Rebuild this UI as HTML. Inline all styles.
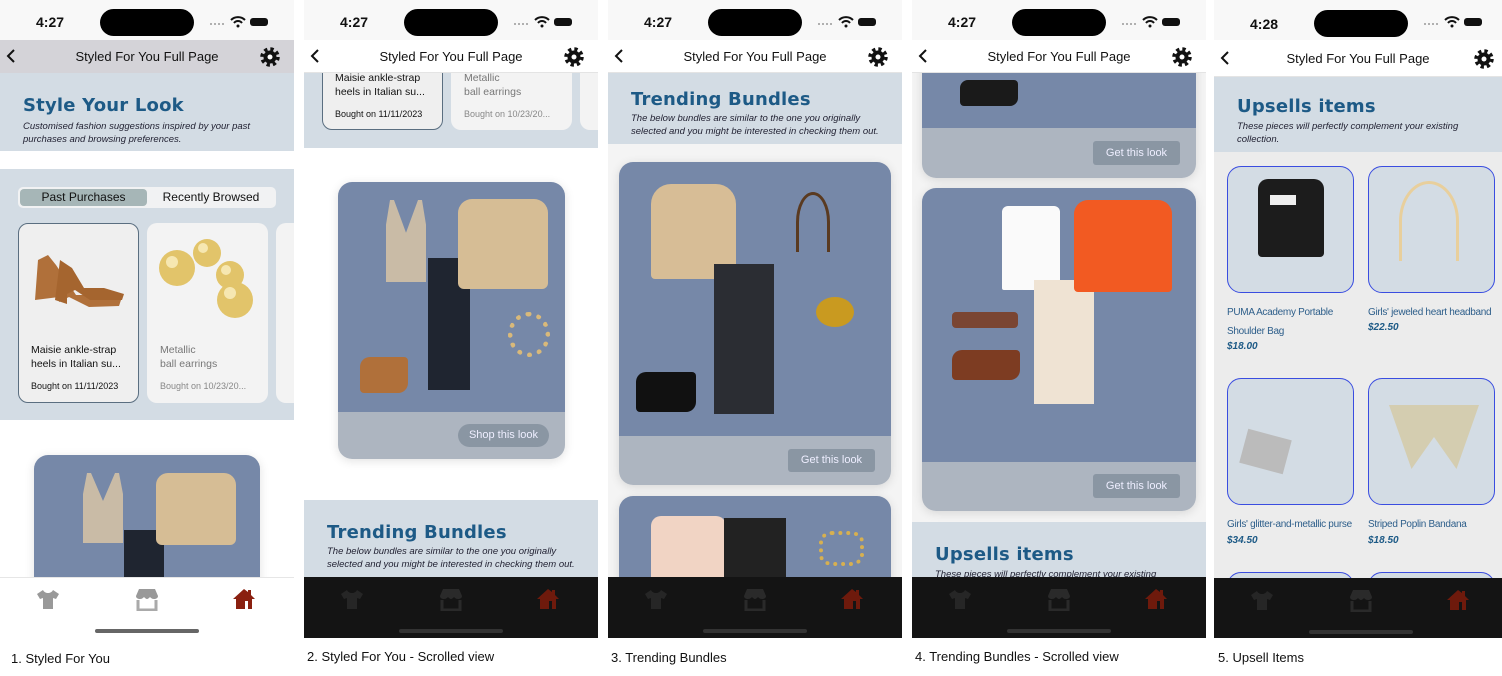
<!DOCTYPE html>
<html><head><meta charset="utf-8"><style>
*{margin:0;padding:0;box-sizing:border-box}
body{width:1502px;height:676px;background:#fff;position:relative;overflow:hidden;font-family:"Liberation Sans",sans-serif}
.a{position:absolute}
.ph{position:absolute;top:0;height:638px;overflow:hidden;background:#fff}
.sb{position:absolute;left:0;right:0;top:0;height:40px;background:#f8f8f8}
.time{position:absolute;top:14px;left:36px;font-size:14px;font-weight:bold;color:#111}
.isl{position:absolute;top:9px;left:100px;width:94px;height:27px;border-radius:14px;background:#000}
.nav{position:absolute;left:0;right:0;top:40px;height:33px;background:#fff;border-bottom:1px solid #e4e4e4}
.nav .t{position:absolute;left:0;right:0;top:9px;text-align:center;font-size:13px;color:#111}
.band{position:absolute;left:0;right:0;background:#d3dce4}
.h1{position:absolute;font-family:"DejaVu Sans",sans-serif;font-weight:bold;color:#1d5a86;font-size:18px;letter-spacing:.2px}
.sub{position:absolute;font-style:italic;font-size:9.5px;line-height:13px;color:#223}
.card{position:absolute;border-radius:14px;overflow:hidden;box-shadow:0 2px 10px rgba(0,0,0,.12)}
.img{position:absolute;left:0;right:0;top:0;background:#7688a8}
.bot{position:absolute;left:0;right:0;bottom:0;background:#adb5c0}
.btn{position:absolute;background:#8a96a3;color:#eef;font-size:11px;text-align:center}
.bn{position:absolute;left:0;right:0;top:577px;height:61px}
.cap{position:absolute;top:651px;font-family:"Liberation Sans",sans-serif;font-size:13px;color:#111}
.it{position:absolute;border-radius:14px;border:1px solid #3a4de0;background:#d3dce4}
.ttl{position:absolute;font-size:10px;letter-spacing:-.3px;white-space:nowrap;color:#2d5e8a;font-family:"Liberation Sans",sans-serif;line-height:19px}
.pr{position:absolute;font-size:10px;font-style:italic;font-weight:bold;color:#1d5a86}
</style></head><body>

<!-- ========== PHONE 1 ========== -->
<div class="ph" style="left:0;width:294px">
 <div class="sb"></div><div class="time">4:27</div><div class="isl"></div>
 <svg class="a" style="left:208px;top:16px" width="64" height="12"><g fill="#999"><circle cx="3" cy="8" r="1"/><circle cx="7" cy="8" r="1"/><circle cx="11" cy="8" r="1"/><circle cx="15" cy="8" r="1"/></g><path d="M23 4a10 10 0 0 1 14 0M26 7a5 5 0 0 1 8 0" stroke="#111" stroke-width="2" fill="none"/><circle cx="30" cy="10" r="1.5" fill="#111"/><rect x="42" y="2" width="18" height="8" rx="3" fill="#111"/></svg>
 <div class="nav" style="background:#d4d3d8;border:0"><div class="t">Styled For You Full Page</div></div>
 <div class="band" style="top:73px;height:78px"></div>
 <div class="h1" style="left:23px;top:95px">Style Your Look</div>
 <div class="sub" style="left:23px;top:120px">Customised fashion suggestions inspired by your past<br>purchases and browsing preferences.</div>
 <div class="band" style="top:169px;height:251px"></div>
 <div class="a" style="left:18px;top:187px;width:258px;height:21px;background:#f1f2f3;border-radius:5px"></div>
 <div class="a" style="left:20px;top:189px;width:127px;height:17px;background:#a6b6b7;border-radius:4px;font-size:12px;text-align:center;line-height:17px;color:#111">Past Purchases</div>
 <div class="a" style="left:148px;top:189px;width:126px;height:17px;font-size:12px;text-align:center;line-height:17px;color:#111">Recently Browsed</div>
 <div class="a" style="left:18px;top:223px;width:121px;height:180px;background:#efefef;border:1.5px solid #5a6e80;border-radius:10px"></div>
 <svg class="a" style="left:30px;top:240px" width="98" height="70"><path d="M5 60l3-40 10-5 8 10 20 30h20l25 5-2 6-30 1-20-10-10 5v-5z" fill="#b0703a"/><path d="M25 60l5-40 12 8 12 20h20l20 6-2 6H60l-15-10-8 4v10z" fill="#a5652f"/></svg>
 <div class="a" style="left:31px;top:343px;font-size:10.5px;line-height:14px;color:#111">Maisie ankle-strap<br>heels in Italian su...</div>
 <div class="a" style="left:31px;top:381px;font-size:9px;color:#111">Bought on 11/11/2023</div>
 <div class="a" style="left:147px;top:223px;width:121px;height:180px;background:#f3f3f3;border-radius:10px"></div>
 <svg class="a" style="left:158px;top:235px" width="100" height="90"><g fill="#e2c46a"><circle cx="19" cy="33" r="18"/><circle cx="49" cy="18" r="14"/><circle cx="72" cy="40" r="14"/><circle cx="77" cy="65" r="18"/></g><g fill="#fff7d0" opacity=".7"><circle cx="14" cy="27" r="6"/><circle cx="45" cy="13" r="5"/><circle cx="68" cy="35" r="5"/><circle cx="72" cy="58" r="6"/></g></svg>
 <div class="a" style="left:160px;top:343px;font-size:10.5px;line-height:14px;color:#777">Metallic<br>ball earrings</div>
 <div class="a" style="left:160px;top:381px;font-size:9px;color:#888">Bought on 10/23/20...</div>
 <div class="a" style="left:276px;top:223px;width:30px;height:180px;background:#f3f3f3;border-radius:10px"></div>
 <div class="card" style="left:34px;top:455px;width:226px;height:160px"><div class="img" style="height:160px"></div>
  <div class="a" style="left:49px;top:18px;width:40px;height:70px;background:#c9bba6;clip-path:polygon(10% 0,20% 0,50% 40%,80% 0,90% 0,100% 30%,100% 100%,0 100%,0 30%)"></div>
  <div class="a" style="left:90px;top:75px;width:40px;height:50px;background:#1f2530"></div>
  <div class="a" style="left:122px;top:18px;width:80px;height:72px;background:#d6bd95;border-radius:12px 12px 6px 6px"></div>
 </div>
 <div class="bn" style="background:#fff;border-top:1px solid #e6e6e6"></div>
 <svg class="a" style="left:37px;top:589px" width="22" height="20"><path d="M6 1l-6 4 3 5 3-1v11h10V9l3 1 3-5-6-4c-1 2-3 3-5 3S7 3 6 1z" fill="#999"/></svg>
 <svg class="a" style="left:136px;top:589px" width="22" height="22"><path d="M3 0h16l3 7c0 2-2 3-4 3s-3-1-4-2c-1 1-2 2-3 2s-2-1-3-2c-1 1-2 2-4 2S0 9 0 7z" fill="#999"/><path d="M2 11v10h18V11" stroke="#aaa" stroke-width="3" fill="none"/></svg>
 <svg class="a" style="left:233px;top:588px" width="22" height="22"><path d="M11 1L0 11h3v10h16V11h3L18 7V2h-3v2z" fill="#8a2010"/><rect x="12" y="13" width="3" height="8" fill="#fff"/></svg>
 <div class="a" style="left:95px;top:629px;width:104px;height:4px;border-radius:2px;background:#666"></div>
</div>
<div class="cap" style="left:11px">1. Styled For You</div>

<!-- ========== PHONE 2 ========== -->
<div class="ph" style="left:304px;width:294px">
 <div class="sb"></div><div class="time">4:27</div><div class="isl"></div>
 <svg class="a" style="left:208px;top:16px" width="64" height="12"><g fill="#999"><circle cx="3" cy="8" r="1"/><circle cx="7" cy="8" r="1"/><circle cx="11" cy="8" r="1"/><circle cx="15" cy="8" r="1"/></g><path d="M23 4a10 10 0 0 1 14 0M26 7a5 5 0 0 1 8 0" stroke="#111" stroke-width="2" fill="none"/><circle cx="30" cy="10" r="1.5" fill="#111"/><rect x="42" y="2" width="18" height="8" rx="3" fill="#111"/></svg>
 <div class="band" style="top:73px;height:75px"></div>
 <div class="a" style="left:18px;top:40px;width:121px;height:90px;background:#efefef;border:1.5px solid #5a6e80;border-radius:10px"></div>
 <div class="a" style="left:31px;top:71px;font-size:10.5px;line-height:14px;color:#111">Maisie ankle-strap<br>heels in Italian su...</div>
 <div class="a" style="left:31px;top:109px;font-size:9px;color:#111">Bought on 11/11/2023</div>
 <div class="a" style="left:147px;top:40px;width:121px;height:90px;background:#f3f3f3;border-radius:10px"></div>
 <div class="a" style="left:160px;top:71px;font-size:10.5px;line-height:14px;color:#777">Metallic<br>ball earrings</div>
 <div class="a" style="left:160px;top:109px;font-size:9px;color:#888">Bought on 10/23/20...</div>
 <div class="a" style="left:276px;top:40px;width:30px;height:90px;background:#f3f3f3;border-radius:10px"></div>
 <div class="nav"><div class="t">Styled For You Full Page</div></div>
 <div class="card" style="left:34px;top:182px;width:227px;height:277px"><div class="img" style="height:230px"></div><div class="bot" style="height:47px"></div>
  <div class="a" style="left:48px;top:18px;width:40px;height:82px;background:#c9bba6;clip-path:polygon(10% 0,20% 0,50% 40%,80% 0,90% 0,100% 30%,100% 100%,0 100%,0 30%)"></div>
  <div class="a" style="left:90px;top:76px;width:42px;height:132px;background:#1f2530"></div>
  <div class="a" style="left:120px;top:17px;width:90px;height:90px;background:#d6bd95;border-radius:14px 14px 6px 6px"></div>
  <div class="a" style="left:170px;top:130px;width:42px;height:45px;border:5px dotted #d9b97a;border-radius:50%"></div>
  <div class="a" style="left:22px;top:175px;width:48px;height:36px;background:#b0703a;border-radius:10px 4px 10px 4px"></div>
  <div class="btn" style="left:120px;top:242px;width:91px;height:23px;border-radius:12px;line-height:23px">Shop this look</div>
 </div>
 <div class="band" style="top:500px;height:77px"></div>
 <div class="h1" style="left:23px;top:522px">Trending Bundles</div>
 <div class="sub" style="left:23px;top:545px">The below bundles are similar to the one you originally<br>selected and you might be interested in checking them out.</div>
 <div class="bn" style="background:#141414"></div>
 <svg class="a" style="left:37px;top:589px" width="22" height="20"><path d="M6 1l-6 4 3 5 3-1v11h10V9l3 1 3-5-6-4c-1 2-3 3-5 3S7 3 6 1z" fill="#262626"/></svg>
 <svg class="a" style="left:136px;top:589px" width="22" height="22"><path d="M3 0h16l3 7c0 2-2 3-4 3s-3-1-4-2c-1 1-2 2-3 2s-2-1-3-2c-1 1-2 2-4 2S0 9 0 7z" fill="#2a2a2a"/><path d="M2 11v10h18V11" stroke="#2a2a2a" stroke-width="3" fill="none"/></svg>
 <svg class="a" style="left:233px;top:588px" width="22" height="22"><path d="M11 1L0 11h3v10h16V11h3L18 7V2h-3v2z" fill="#6e1a0c"/><rect x="12" y="13" width="3" height="8" fill="#141414"/></svg>
 <div class="a" style="left:95px;top:629px;width:104px;height:4px;border-radius:2px;background:#333"></div>
</div>
<div class="cap" style="left:307px;top:649px">2. Styled For You - Scrolled view</div>

<!-- ========== PHONE 3 ========== -->
<div class="ph" style="left:608px;width:294px;background:#f4f4f4">
 <div class="sb"></div><div class="time">4:27</div><div class="isl"></div>
 <svg class="a" style="left:208px;top:16px" width="64" height="12"><g fill="#999"><circle cx="3" cy="8" r="1"/><circle cx="7" cy="8" r="1"/><circle cx="11" cy="8" r="1"/><circle cx="15" cy="8" r="1"/></g><path d="M23 4a10 10 0 0 1 14 0M26 7a5 5 0 0 1 8 0" stroke="#111" stroke-width="2" fill="none"/><circle cx="30" cy="10" r="1.5" fill="#111"/><rect x="42" y="2" width="18" height="8" rx="3" fill="#111"/></svg>
 <div class="nav"><div class="t">Styled For You Full Page</div></div>
 <div class="band" style="top:73px;height:71px"></div>
 <div class="h1" style="left:23px;top:89px">Trending Bundles</div>
 <div class="sub" style="left:23px;top:112px">The below bundles are similar to the one you originally<br>selected and you might be interested in checking them out.</div>
 <div class="card" style="left:11px;top:162px;width:272px;height:323px"><div class="img" style="height:274px"></div><div class="bot" style="height:49px"></div>
  <div class="a" style="left:32px;top:22px;width:85px;height:95px;background:#d7bd96;border-radius:20px 20px 4px 4px"></div>
  <div class="a" style="left:95px;top:102px;width:60px;height:150px;background:#2b2d33"></div>
  <div class="a" style="left:177px;top:30px;width:34px;height:60px;border:3px solid #5a3a20;border-bottom:0;border-radius:50% 50% 0 0"></div>
  <div class="a" style="left:197px;top:135px;width:38px;height:30px;background:#c99a20;border-radius:50%"></div>
  <div class="a" style="left:17px;top:210px;width:60px;height:40px;background:#111;border-radius:10px 4px 10px 4px"></div>
  <div class="btn" style="left:169px;top:287px;width:87px;height:23px;border-radius:3px;line-height:23px">Get this look</div>
 </div>
 <div class="card" style="left:11px;top:496px;width:272px;height:150px"><div class="img" style="height:150px"></div>
  <div class="a" style="left:32px;top:20px;width:75px;height:100px;background:#f1d4c4;border-radius:10px 10px 0 0"></div>
  <div class="a" style="left:105px;top:22px;width:62px;height:100px;background:#222"></div>
  <div class="a" style="left:200px;top:35px;width:45px;height:35px;border:4px dotted #d7b050;border-radius:30%"></div>
 </div>
 <div class="bn" style="background:#141414"></div>
 <svg class="a" style="left:37px;top:589px" width="22" height="20"><path d="M6 1l-6 4 3 5 3-1v11h10V9l3 1 3-5-6-4c-1 2-3 3-5 3S7 3 6 1z" fill="#262626"/></svg>
 <svg class="a" style="left:136px;top:589px" width="22" height="22"><path d="M3 0h16l3 7c0 2-2 3-4 3s-3-1-4-2c-1 1-2 2-3 2s-2-1-3-2c-1 1-2 2-4 2S0 9 0 7z" fill="#2a2a2a"/><path d="M2 11v10h18V11" stroke="#2a2a2a" stroke-width="3" fill="none"/></svg>
 <svg class="a" style="left:233px;top:588px" width="22" height="22"><path d="M11 1L0 11h3v10h16V11h3L18 7V2h-3v2z" fill="#6e1a0c"/><rect x="12" y="13" width="3" height="8" fill="#141414"/></svg>
 <div class="a" style="left:95px;top:629px;width:104px;height:4px;border-radius:2px;background:#333"></div>
</div>
<div class="cap" style="left:611px;top:650px">3. Trending Bundles</div>

<!-- ========== PHONE 4 ========== -->
<div class="ph" style="left:912px;width:294px;background:#f4f4f4">
 <div class="card" style="left:10px;top:40px;width:274px;height:138px;border-radius:0 0 14px 14px"><div class="img" style="height:88px"></div><div class="bot" style="height:50px"></div>
  <div class="a" style="left:38px;top:40px;width:58px;height:26px;background:#1a1a1a;border-radius:8px 4px 8px 4px"></div>
  <div class="btn" style="left:171px;top:101px;width:87px;height:24px;border-radius:3px;line-height:24px">Get this look</div>
 </div>
 <div class="sb"></div><div class="time">4:27</div><div class="isl"></div>
 <svg class="a" style="left:208px;top:16px" width="64" height="12"><g fill="#999"><circle cx="3" cy="8" r="1"/><circle cx="7" cy="8" r="1"/><circle cx="11" cy="8" r="1"/><circle cx="15" cy="8" r="1"/></g><path d="M23 4a10 10 0 0 1 14 0M26 7a5 5 0 0 1 8 0" stroke="#111" stroke-width="2" fill="none"/><circle cx="30" cy="10" r="1.5" fill="#111"/><rect x="42" y="2" width="18" height="8" rx="3" fill="#111"/></svg>
 <div class="nav"><div class="t">Styled For You Full Page</div></div>
 <div class="card" style="left:10px;top:188px;width:274px;height:323px"><div class="img" style="height:274px"></div><div class="bot" style="height:49px"></div>
  <div class="a" style="left:80px;top:18px;width:58px;height:84px;background:#fafafa;border-radius:6px 6px 2px 2px"></div>
  <div class="a" style="left:112px;top:92px;width:60px;height:124px;background:#efe3d3"></div>
  <div class="a" style="left:152px;top:12px;width:98px;height:92px;background:#f25a22;border-radius:14px 14px 4px 4px"></div>
  <div class="a" style="left:30px;top:124px;width:66px;height:16px;background:#7a4532;border-radius:4px"></div>
  <div class="a" style="left:30px;top:162px;width:68px;height:30px;background:#7d3c22;border-radius:10px 4px 10px 4px"></div>
  <div class="btn" style="left:171px;top:286px;width:87px;height:24px;border-radius:3px;line-height:24px">Get this look</div>
 </div>
 <div class="band" style="top:522px;height:55px"></div>
 <div class="h1" style="left:23px;top:544px">Upsells items</div>
 <div class="sub" style="left:23px;top:568px">These pieces will perfectly complement your existing</div>
 <div class="bn" style="background:#141414"></div>
 <svg class="a" style="left:37px;top:589px" width="22" height="20"><path d="M6 1l-6 4 3 5 3-1v11h10V9l3 1 3-5-6-4c-1 2-3 3-5 3S7 3 6 1z" fill="#262626"/></svg>
 <svg class="a" style="left:136px;top:589px" width="22" height="22"><path d="M3 0h16l3 7c0 2-2 3-4 3s-3-1-4-2c-1 1-2 2-3 2s-2-1-3-2c-1 1-2 2-4 2S0 9 0 7z" fill="#2a2a2a"/><path d="M2 11v10h18V11" stroke="#2a2a2a" stroke-width="3" fill="none"/></svg>
 <svg class="a" style="left:233px;top:588px" width="22" height="22"><path d="M11 1L0 11h3v10h16V11h3L18 7V2h-3v2z" fill="#6e1a0c"/><rect x="12" y="13" width="3" height="8" fill="#141414"/></svg>
 <div class="a" style="left:95px;top:629px;width:104px;height:4px;border-radius:2px;background:#333"></div>
</div>
<div class="cap" style="left:915px;top:649px">4. Trending Bundles - Scrolled view</div>

<!-- ========== PHONE 5 ========== -->
<div class="ph" style="left:1214px;width:288px;background:#ececec">
 <div class="sb"></div><div class="time" style="top:16px">4:28</div><div class="isl" style="left:100px;top:10px"></div>
 <svg class="a" style="left:208px;top:16px" width="64" height="12"><g fill="#999"><circle cx="3" cy="8" r="1"/><circle cx="7" cy="8" r="1"/><circle cx="11" cy="8" r="1"/><circle cx="15" cy="8" r="1"/></g><path d="M23 4a10 10 0 0 1 14 0M26 7a5 5 0 0 1 8 0" stroke="#111" stroke-width="2" fill="none"/><circle cx="30" cy="10" r="1.5" fill="#111"/><rect x="42" y="2" width="18" height="8" rx="3" fill="#111"/></svg>
 <div class="nav" style="height:37px"><div class="t" style="top:11px">Styled For You Full Page</div></div>
 <div class="band" style="top:77px;height:75px"></div>
 <div class="h1" style="left:23px;top:96px">Upsells items</div>
 <div class="sub" style="left:23px;top:120px">These pieces will perfectly complement your existing<br>collection.</div>
 <div class="it" style="left:13px;top:166px;width:127px;height:127px"><div class="a" style="left:30px;top:12px;width:66px;height:78px;background:#1c1c1c;border-radius:10px 10px 4px 4px"></div><div class="a" style="left:42px;top:28px;width:26px;height:10px;background:#eee"></div></div>
 <div class="it" style="left:154px;top:166px;width:127px;height:127px"><div class="a" style="left:30px;top:14px;width:60px;height:80px;border:3px solid #e8cf9c;border-bottom:0;border-radius:50% 50% 0 0"></div></div>
 <div class="ttl" style="left:13px;top:303px">PUMA Academy Portable<br>Shoulder Bag</div>
 <div class="pr" style="left:13px;top:341px">$18.00</div>
 <div class="ttl" style="left:154px;top:303px">Girls' jeweled heart headband</div>
 <div class="pr" style="left:154px;top:322px">$22.50</div>
 <div class="it" style="left:13px;top:378px;width:127px;height:127px"><div class="a" style="left:15px;top:55px;width:45px;height:35px;background:#bbb;transform:rotate(15deg)"></div></div>
 <div class="it" style="left:154px;top:378px;width:127px;height:127px"><div class="a" style="left:20px;top:10px;width:90px;height:80px;background:#d4cdb0;clip-path:polygon(0 20%,100% 20%,75% 100%,50% 60%,25% 100%)"></div></div>
 <div class="ttl" style="left:13px;top:515px">Girls' glitter-and-metallic purse</div>
 <div class="pr" style="left:13px;top:535px">$34.50</div>
 <div class="ttl" style="left:154px;top:515px">Striped Poplin Bandana</div>
 <div class="pr" style="left:154px;top:535px">$18.50</div>
 <div class="it" style="left:13px;top:572px;width:127px;height:60px"></div>
 <div class="it" style="left:154px;top:572px;width:127px;height:60px"></div>
 <div class="bn" style="background:#141414;top:578px"></div>
 <svg class="a" style="left:37px;top:590px" width="22" height="20"><path d="M6 1l-6 4 3 5 3-1v11h10V9l3 1 3-5-6-4c-1 2-3 3-5 3S7 3 6 1z" fill="#262626"/></svg>
 <svg class="a" style="left:136px;top:590px" width="22" height="22"><path d="M3 0h16l3 7c0 2-2 3-4 3s-3-1-4-2c-1 1-2 2-3 2s-2-1-3-2c-1 1-2 2-4 2S0 9 0 7z" fill="#2a2a2a"/><path d="M2 11v10h18V11" stroke="#2a2a2a" stroke-width="3" fill="none"/></svg>
 <svg class="a" style="left:233px;top:589px" width="22" height="22"><path d="M11 1L0 11h3v10h16V11h3L18 7V2h-3v2z" fill="#6e1a0c"/><rect x="12" y="13" width="3" height="8" fill="#141414"/></svg>
 <div class="a" style="left:95px;top:630px;width:104px;height:4px;border-radius:2px;background:#333"></div>
</div>
<div class="cap" style="left:1218px;top:650px">5. Upsell Items</div>

<!-- back arrows and gears -->
<svg class="a" style="left:0;top:0" width="1502" height="80">
 <g fill="none" stroke="#111" stroke-width="2"><path d="M14 50l-6 6 6 6"/><path d="M318 50l-6 6 6 6"/><path d="M622 50l-6 6 6 6"/><path d="M926 50l-6 6 6 6"/><path d="M1228 52l-6 6 6 6"/></g>
 <g fill="#111">
  <g transform="translate(270 57)"><circle r="6.5"/><circle r="8" fill="none" stroke="#111" stroke-width="3.5" stroke-dasharray="3.3 3"/></g>
  <g transform="translate(574 57)"><circle r="6.5"/><circle r="8" fill="none" stroke="#111" stroke-width="3.5" stroke-dasharray="3.3 3"/></g>
  <g transform="translate(878 57)"><circle r="6.5"/><circle r="8" fill="none" stroke="#111" stroke-width="3.5" stroke-dasharray="3.3 3"/></g>
  <g transform="translate(1182 57)"><circle r="6.5"/><circle r="8" fill="none" stroke="#111" stroke-width="3.5" stroke-dasharray="3.3 3"/></g>
  <g transform="translate(1484 59)"><circle r="6.5"/><circle r="8" fill="none" stroke="#111" stroke-width="3.5" stroke-dasharray="3.3 3"/></g>
 </g>
 <g fill="#fff"><circle cx="270" cy="57" r="2.5"/><circle cx="574" cy="57" r="2.5"/><circle cx="878" cy="57" r="2.5"/><circle cx="1182" cy="57" r="2.5"/><circle cx="1484" cy="59" r="2.5"/></g>
</svg>
</body></html>
